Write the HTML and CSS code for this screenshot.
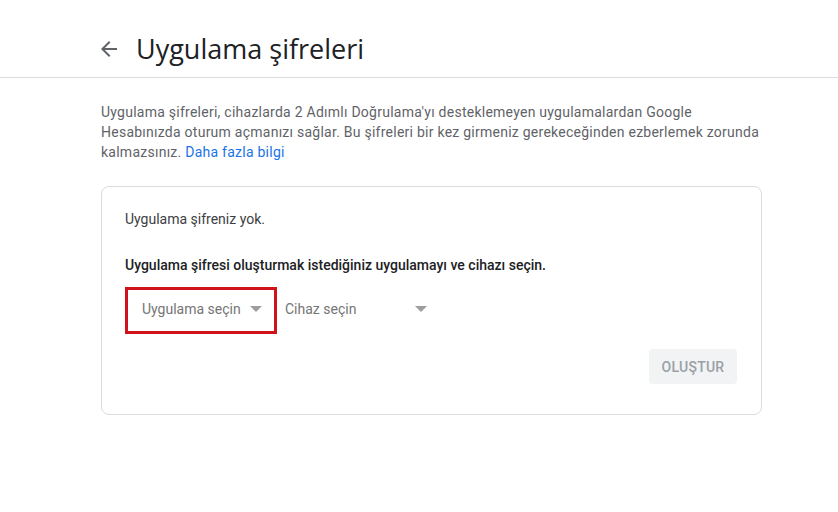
FILE: index.html
```html
<!DOCTYPE html>
<html lang="tr">
<head>
<meta charset="utf-8">
<link rel="stylesheet" href="styles.css">
</head>
<body>
<header class="topbar">
  <svg class="back" width="24" height="24" viewBox="0 0 24 24"><path d="M20 11H7.83l5.59-5.59L12 4l-8 8 8 8 1.41-1.41L7.83 13H20v-2z" fill="#5f6368"/></svg>
  <h1 class="title">Uygulama şifreleri</h1>
</header>
<main class="content">
  <p class="desc">Uygulama şifreleri, cihazlarda 2 Adımlı Doğrulama'yı desteklemeyen uygulamalardan Google Hesabınızda oturum açmanızı sağlar. Bu şifreleri bir kez girmeniz gerekeceğinden ezberlemek zorunda kalmazsınız. <a class="link" href="#">Daha fazla bilgi</a></p>
  <section class="card">
    <p class="none">Uygulama şifreniz yok.</p>
    <p class="prompt">Uygulama şifresi oluşturmak istediğiniz uygulamayı ve cihazı seçin.</p>
    <div class="selects">
      <div class="select select-app highlighted"><span>Uygulama seçin</span><i class="caret"></i></div>
      <div class="select select-dev"><span>Cihaz seçin</span><i class="caret"></i></div>
    </div>
    <div class="actions"><button class="btn">OLUŞTUR</button></div>
  </section>
</main>
</body>
</html>
```
FILE: styles.css
```css
* { box-sizing: border-box; }
body {
  margin: 0;
  background: #fff;
  font-family: Roboto, "Liberation Sans", Arial, sans-serif;
  color: #202124;
}
.topbar {
  height: 78px;
  border-bottom: 1px solid #dadce0;
  display: flex;
  align-items: center;
  padding-left: 97px;
  padding-top: 20px;
}
.back { margin-right: 15px; }
.title {
  margin: 0;
  font-family: "Open Sans", Roboto, sans-serif;
  font-weight: 400;
  font-size: 27px;
  color: #202124;
}
.content {
  padding-left: 101px;
  width: 762px;
}
.desc {
  margin: 24px 0 0;
  max-width: 660px;
  font-size: 14px;
  line-height: 20px;
  color: #5f6368;
  letter-spacing: 0.25px;
}
.link { color: #1a73e8; text-decoration: none; }
.card {
  margin-top: 24px;
  border: 1px solid #dadce0;
  border-radius: 8px;
  padding: 22px 24px 29px 23px;
  height: 229px;
}
.none {
  margin: 0;
  font-size: 14px;
  line-height: 20px;
  color: #3c4043;
}
.prompt {
  margin: 26px 0 0;
  font-size: 14px;
  line-height: 20px;
  font-weight: 500;
  color: #202124;
}
.selects {
  display: flex;
  margin-top: 12px;
  align-items: center;
}
.select {
  display: flex;
  align-items: center;
  height: 47px;
  padding-bottom: 4px;
  font-size: 14px;
  color: #757575;
}
.select-app {
  width: 152px;
  border: 3px solid #d0121b;
  padding-left: 14px;
}
.select-app .caret { margin-left: 9px; }
.select-dev {
  width: 150px;
  padding-left: 8px;
}
.select-dev .caret { margin-left: auto; }
.caret {
  width: 0; height: 0;
  border-left: 6px solid transparent;
  border-right: 6px solid transparent;
  border-top: 6px solid #9e9e9e;
}
.actions {
  display: flex;
  justify-content: flex-end;
  margin-top: 15px;
}
.btn {
  width: 88px;
  height: 35px;
  border: none;
  border-radius: 4px;
  background: #f1f3f4;
  color: #9aa0a6;
  font-family: Roboto, sans-serif;
  font-weight: 500;
  font-size: 14px;
  letter-spacing: 0.25px;
}
```
